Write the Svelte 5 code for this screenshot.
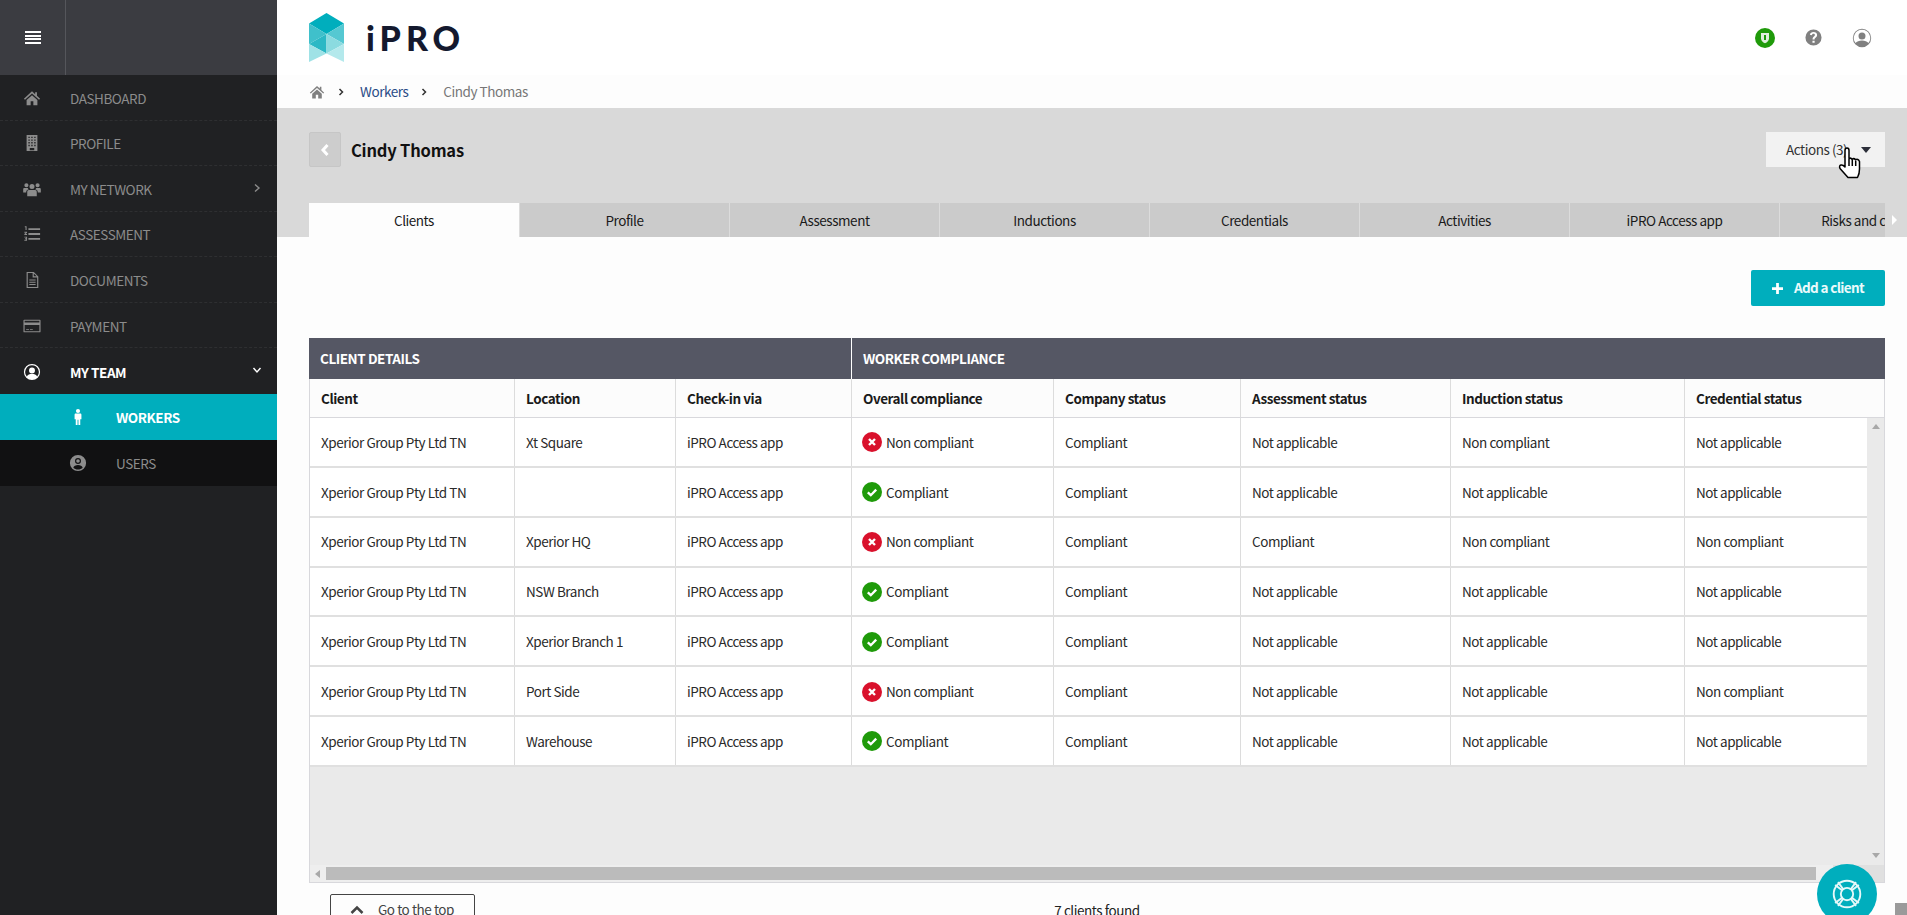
<script>
  const menu = [
    { label: 'DASHBOARD', d: 'M10 2.500l3.500 3.200V3.500h2v4l3.500 3.300-1.200 1.200L10 5l-7.800 7L1 10.800zM4 12.200L10 7l6 5.200V18h-4.500v-4.500h-3V18H4z' },
    { label: 'PROFILE', d: 'M4 1h12v18H4zM6 3v1.500h1.500V3zM9.200 3v1.500h1.500V3zM12.500 3v1.500H14V3zM6 6v1.500h1.500V6zM9.200 6v1.500h1.500V6zM12.500 6v1.500H14V6zM6 9v1.500h1.500V9zM9.200 9v1.500h1.500V9zM12.500 9v1.500H14V9zM6 12v1.500h1.500V12zM9.200 12v1.500h1.500V12zM12.500 12v1.500H14V12zM7.500 15.500V18h5v-2.500z' },
    { label: 'MY NETWORK', arrow: 'right', d: 'M10 4.500a2.800 2.800 0 1 1 0 5.600 2.800 2.800 0 0 1 0-5.600zM3.800 3.500a2.300 2.300 0 1 1 0 4.600 2.300 2.300 0 0 1 0-4.600zM16.200 3.500a2.300 2.300 0 1 1 0 4.600 2.300 2.300 0 0 1 0-4.600zM6.500 11h7c1.200 0 1.800 1 1.800 2.500V18H4.700v-4.500C4.700 12 5.300 11 6.500 11zM.2 10.500c0-1 .6-1.500 1.500-1.500h3.600c.4 1 .7 1.200 1.200 1.300-2 .4-3 1.500-3 3.700H.2zM19.800 10.500c0-1-.6-1.500-1.500-1.500h-3.600c-.4 1-.7 1.200-1.200 1.300 2 .4 3 1.500 3 3.700h3.300z' },
    { label: 'ASSESSMENT', d: 'M6 3.500h13v2H6zM6 9h13v2H6zM6 14.500h13v2H6zM2 1.500h2v4H2.800V2.600H2zM1.500 7.500h3v1L3 10h1.500v1h-3v-1L3 8.500H1.500zM1.500 13h3v4.500h-3v-1h2v-.7H2.300v-1h1.200V14h-2z' },
    { label: 'DOCUMENTS', d: 'M4 1h8l5 5v13H4zM5.300 2.300v15.400h10.400V7.200h-5V2.300zM12 2.800v3.100h3.200zM7 9.500h7v1.100H7zM7 12h7v1.100H7zM7 14.500h7v1.100H7z' },
    { label: 'PAYMENT', d: 'M1.500 3h17a1 1 0 0 1 1 1v12a1 1 0 0 1-1 1h-17a1 1 0 0 1-1-1V4a1 1 0 0 1 1-1zM1.800 9v6.700h16.400V9zM1.800 4.300v1.900h16.400V4.300zM3.500 13.200h3.200v1H3.500zM7.700 13.200h3.200v1H7.700z' },
    { label: 'MY TEAM', active: true, arrow: 'down', d: 'M10 1a9 9 0 1 0 0 18 9 9 0 0 0 0-18zM10 2.500a7.500 7.500 0 0 1 5.700 12.400c-1-2-3-2.600-5.700-2.600s-4.700.6-5.700 2.600A7.500 7.500 0 0 1 10 2.500zM10 5a3.300 3.300 0 1 1 0 6.600A3.300 3.300 0 0 1 10 5z' }
  ];

  const tabs = ['Clients', 'Profile', 'Assessment', 'Inductions', 'Credentials', 'Activities', 'iPRO Access app', 'Risks and compliance'];
  const heads = ['Client', 'Location', 'Check-in via', 'Overall compliance', 'Company status', 'Assessment status', 'Induction status', 'Credential status'];

  const rows = [
    { location: 'Xt Square', ok: false, assessment: 'Not applicable', induction: 'Non compliant', credential: 'Not applicable' },
    { location: '', ok: true, assessment: 'Not applicable', induction: 'Not applicable', credential: 'Not applicable' },
    { location: 'Xperior HQ', ok: false, assessment: 'Compliant', induction: 'Non compliant', credential: 'Non compliant' },
    { location: 'NSW Branch', ok: true, assessment: 'Not applicable', induction: 'Not applicable', credential: 'Not applicable' },
    { location: 'Xperior Branch 1', ok: true, assessment: 'Not applicable', induction: 'Not applicable', credential: 'Not applicable' },
    { location: 'Port Side', ok: false, assessment: 'Not applicable', induction: 'Not applicable', credential: 'Non compliant' },
    { location: 'Warehouse', ok: true, assessment: 'Not applicable', induction: 'Not applicable', credential: 'Not applicable' }
  ];
</script>

<div class="app">
  <aside class="sidebar">
    <div class="side-top">
      <button class="burger" aria-label="Menu"><span></span><span></span><span></span><span></span></button>
    </div>
    <nav>
      {#each menu as item}
        <div class="nav-item" class:active={item.active}>
          <svg class="nav-icon" viewBox="0 0 20 20"><path fill-rule="evenodd" d={item.d} /></svg>
          <span>{item.label}</span>
          {#if item.arrow === 'right'}
            <svg class="nav-arrow" viewBox="0 0 10 10"><path d="M3 1.500l4 3.500-4 3.500" /></svg>
          {:else if item.arrow === 'down'}
            <svg class="nav-arrow" viewBox="0 0 10 10"><path d="M1.500 3l3.500 4 3.500-4" /></svg>
          {/if}
        </div>
      {/each}
      <div class="sub-item current">
        <svg class="sub-icon" viewBox="0 0 20 20"><path d="M10 1a2.300 2.300 0 1 1 0 4.600A2.300 2.300 0 0 1 10 1zM7.500 6.200h5c.8 0 1.300.5 1.300 1.300v5h-1.300V19h-2v-6h-1v6h-2v-6.500H6.200v-5c0-.8.5-1.300 1.300-1.300z" /></svg>
        <span>WORKERS</span>
      </div>
      <div class="sub-item">
        <svg class="sub-icon" viewBox="0 0 20 20"><path fill-rule="evenodd" d="M10 1a9 9 0 1 0 0 18 9 9 0 0 0 0-18zM10 4.500a3.300 3.300 0 1 1 0 6.600 3.300 3.300 0 0 1 0-6.600zM10 5.800a2 2 0 1 0 0 4 2 2 0 0 0 0-4zM4.800 15.200c.6-1.800 2.600-3 5.200-3s4.600 1.200 5.200 3c-1.300 1.300-3.100 2-5.200 2s-3.900-.7-5.200-2z" /></svg>
        <span>USERS</span>
      </div>
    </nav>
  </aside>

  <main>
    <header class="topbar">
      <div class="logo">
        <svg class="logo-mark" viewBox="0 0 35 49">
          <path fill="#00aebd" d="M17.500 0L35 10.500 17.500 21 0 10.500z" />
          <path fill="#3fc0cb" d="M0 10.500L17.500 21 0 31z" />
          <path fill="#2bb8c5" d="M17.500 21L0 31l17.500 9.500z" />
          <path fill="#55c8d2" d="M35 10.500L17.500 21 35 31z" />
          <path fill="#8bdbe0" d="M17.500 21L35 31l-17.500 9.500z" />
          <path fill="#9fe2e6" d="M0 31l17.500 9.500L0 49z" />
          <path fill="#b4e9ec" d="M35 31L17.500 40.500 35 49z" />
        </svg>
        <span class="logo-text">iPRO</span>
      </div>
      <div class="top-icons">
        <span class="shield">
          <svg viewBox="0 0 20 20"><path d="M6 5h8v5.500c0 2.200-1.700 3.700-4 4.800-2.300-1.100-4-2.600-4-4.800z" fill="#dfeedd" /><path d="M9 7h2v5H9z" fill="#1f9a0a" /></svg>
        </span>
        <svg class="help" viewBox="0 0 20 20"><path fill-rule="evenodd" d="M10 1.500a8.500 8.500 0 1 0 0 17 8.500 8.500 0 0 0 0-17zM9 12.200h2.100c0-1.300.5-1.700 1.300-2.300.8-.7 1.400-1.400 1.400-2.600 0-2-1.600-3.100-3.800-3.100-2 0-3.400 1-3.800 2.900l2 .6c.2-1 .8-1.600 1.700-1.600s1.600.5 1.600 1.300c0 .7-.4 1-1 1.500-1 .8-1.500 1.500-1.500 3.300zM8.900 13.300h2.300v2.300H8.900z" /></svg>
        <svg class="account" viewBox="0 0 20 20"><path fill-rule="evenodd" d="M10 .8a9.200 9.200 0 1 0 0 18.400A9.200 9.200 0 0 0 10 .8zM10 1.800a8.200 8.200 0 0 1 6.400 13.300c-1.200-1.800-3.500-2.700-6.400-2.700s-5.200.9-6.400 2.700A8.200 8.200 0 0 1 10 1.800zM10 4.500a3.500 3.500 0 1 1 0 7 3.500 3.500 0 0 1 0-7z" /></svg>
      </div>
    </header>

    <div class="crumbs">
      <svg class="crumb-home" viewBox="0 0 20 20"><path d="M10 2.500l3.500 3.200V3.500h2v4l3.500 3.300-1.200 1.200L10 5l-7.800 7L1 10.800zM4 12.200L10 7l6 5.200V18h-4.500v-4.500h-3V18H4z" /></svg>
      <svg class="crumb-sep" viewBox="0 0 10 10"><path d="M3.500 2l3 3-3 3" /></svg>
      <span class="crumb-link">Workers</span>
      <svg class="crumb-sep" viewBox="0 0 10 10"><path d="M3.500 2l3 3-3 3" /></svg>
      <span>Cindy Thomas</span>
    </div>

    <section class="band">
      <div class="title-row">
        <button class="back" aria-label="Back">
          <svg viewBox="0 0 12 16"><path d="M8.500 3L4 8l4.500 5" /></svg>
        </button>
        <h1>Cindy Thomas</h1>
        <button class="actions">Actions (3) <i class="caret"></i></button>
      </div>
      <div class="tabs">
        {#each tabs as tab, i}
          <div class="tab" class:selected={i === 0}>{tab}</div>
        {/each}
      </div>
      <i class="tab-next"></i>
    </section>

    <section class="content">
      <div class="toolbar">
        <button class="add">
          <svg viewBox="0 0 12 12"><path d="M4.500 0h3v4.500H12v3H7.500V12h-3V7.500H0v-3h4.500z" /></svg>
          Add a client
        </button>
      </div>

      <div class="table">
        <div class="groups">
          <div>CLIENT DETAILS</div>
          <div>WORKER COMPLIANCE</div>
        </div>
        <div class="cols heads">
          {#each heads as head}
            <div class="cell">{head}</div>
          {/each}
        </div>
        <div class="body">
          <div class="rows">
            {#each rows as row}
              <div class="cols row">
                <div class="cell">Xperior Group Pty Ltd TN</div>
                <div class="cell">{row.location}</div>
                <div class="cell">iPRO Access app</div>
                <div class="cell status">
                  {#if row.ok}
                    <svg class="badge" viewBox="0 0 20 20"><circle cx="10" cy="10" r="10" fill="#1f9a0a" /><path d="M5.800 10.300l3 2.900 5.400-5.600" fill="none" stroke="#fff" stroke-width="2.300" /></svg>
                    Compliant
                  {:else}
                    <svg class="badge" viewBox="0 0 20 20"><circle cx="10" cy="10" r="10" fill="#d9112c" /><path d="M7 7l6 6M13 7l-6 6" fill="none" stroke="#fff" stroke-width="2.400" /></svg>
                    Non compliant
                  {/if}
                </div>
                <div class="cell">Compliant</div>
                <div class="cell">{row.assessment}</div>
                <div class="cell">{row.induction}</div>
                <div class="cell">{row.credential}</div>
              </div>
            {/each}
          </div>
          <div class="vscroll">
            <i class="tri up"></i>
            <i class="tri down"></i>
          </div>
        </div>
        <div class="hscroll">
          <i class="tri left"></i>
          <div class="thumb"></div>
          <div class="corner"></div>
        </div>
      </div>

      <div class="footer">
        <button class="go-top">
          <svg viewBox="0 0 14 10"><path d="M1.500 8L7 2.500 12.500 8" /></svg>
          Go to the top
        </button>
        <div class="found">7 clients found</div>
      </div>
    </section>
  </main>

  <div class="help-float">
    <svg viewBox="0 0 40 40">
      <circle cx="20" cy="20" r="14" />
      <circle cx="20" cy="20" r="6.500" />
      <path d="M10.500 7.500l6 8M29.500 7.500l-6 8M10.500 32.500l6-8M29.500 32.500l-6-8M7.500 10.500l8 6M32.500 10.500l-8 6M7.500 29.500l8-6M32.500 29.500l-8-6" />
    </svg>
  </div>
  <div class="page-thumb"></div>

  <svg class="cursor" viewBox="0 0 24 33">
    <path d="M7 3.500Q7 1 9 1t2 2.500V11.500q2-1 3 .8 2-1.500 3.500.4 2.500-1.300 4 1.800V22q0 5-2 8.500H10L2 21.500q-1.200-3 1-3.500 2-.4 4 2z" fill="#fff" stroke="#000" stroke-width="1.500" stroke-linejoin="round" />
    <path d="M11 12v7M14.300 13v6M17.700 13.500V19" fill="none" stroke="#000" stroke-width="1.500" />
  </svg>
</div>

<style>
  :global(body) {
    margin: 0;
    font-family: "Noto Sans CJK SC", "Source Sans Pro", "Noto Sans", sans-serif;
    font-size: 13.5px;
    letter-spacing: -0.45px;
    color: #222;
    background: #fdfdfd;
  }

  button {
    font: inherit;
    letter-spacing: inherit;
    cursor: pointer;
  }

  .app {
    display: flex;
    height: 915px;
    overflow: hidden;
    position: relative;
  }

  /* sidebar */
  .sidebar {
    width: 277px;
    flex: none;
    background: #202123;
  }

  .side-top {
    height: 75px;
    background: #3b3c41;
  }

  .burger {
    width: 66px;
    height: 75px;
    padding: 0;
    background: none;
    border: 0;
    border-right: 1px solid #55565b;
    display: flex;
    flex-direction: column;
    align-items: center;
    justify-content: center;
    gap: 1.4px;
  }

  .burger span {
    width: 16px;
    height: 2.2px;
    background: #fff;
  }

  .nav-item {
    height: 45.57px;
    box-sizing: border-box;
    display: flex;
    align-items: center;
    position: relative;
    color: #8c8c8c;
    border-bottom: 1px dashed #2e2f31;
    padding: 1px 0 0 23px;
  }

  .nav-item:nth-child(7) {
    border-bottom: 0;
  }

  .nav-item.active {
    color: #fff;
    font-weight: 700;
  }

  .nav-icon {
    width: 18px;
    height: 18px;
    fill: currentColor;
    margin-right: 29px;
  }

  .nav-arrow {
    position: absolute;
    right: 15px;
    top: 17px;
    width: 10px;
    height: 10px;
    fill: none;
    stroke: currentColor;
    stroke-width: 1.4;
  }

  .sub-item {
    height: 46px;
    display: flex;
    align-items: center;
    padding-left: 69px;
    background: #111112;
    color: #8c8c8c;
  }

  .sub-item.current {
    background: #00aebd;
    color: #fff;
    font-weight: 700;
  }

  .sub-icon {
    width: 18px;
    height: 18px;
    fill: currentColor;
    margin-right: 29px;
  }

  /* main column */
  main {
    flex: 1;
    min-width: 0;
  }

  .topbar {
    height: 75px;
    background: #fff;
    display: flex;
    align-items: center;
    justify-content: space-between;
    padding: 0 35px 0 32px;
  }

  .logo {
    display: flex;
    align-items: center;
    gap: 22px;
  }

  .logo-mark {
    width: 35px;
    height: 49px;
  }

  .logo-text {
    font-family: Lato, sans-serif;
    font-weight: 900;
    font-size: 34px;
    line-height: 1;
    letter-spacing: 5px;
    color: #14192e;
  }

  .top-icons {
    display: flex;
    align-items: center;
  }

  .shield {
    width: 20px;
    height: 20px;
    border-radius: 50%;
    background: #1f9a0a;
    display: block;
    margin-right: 29px;
  }

  .shield svg {
    display: block;
  }

  .help {
    width: 19px;
    height: 19px;
    fill: #808080;
    margin-right: 29px;
  }

  .account {
    width: 20px;
    height: 20px;
    fill: #808080;
  }

  .crumbs {
    height: 33px;
    display: flex;
    align-items: center;
    padding-left: 32px;
    color: #777;
    line-height: 1;
  }

  .crumb-home {
    width: 16px;
    height: 16px;
    fill: #808080;
  }

  .crumb-sep {
    width: 10px;
    height: 10px;
    margin: 0 14px 0 11px;
    fill: none;
    stroke: #333;
    stroke-width: 1.5;
  }

  .crumb-link {
    color: #2b4c87;
  }

  .band {
    height: 129px;
    background: #d9d9d9;
    padding: 24px 22px 0 32px;
    box-sizing: border-box;
    position: relative;
  }

  .title-row {
    display: flex;
    align-items: center;
    height: 35px;
    margin-bottom: 36px;
  }

  .back {
    width: 32px;
    height: 35px;
    padding: 0;
    background: #cdcdcd;
    border: 1px solid #c6c6c6;
    border-radius: 2px;
    display: flex;
    align-items: center;
    justify-content: center;
  }

  .back svg {
    width: 12px;
    height: 16px;
    fill: none;
    stroke: #fff;
    stroke-width: 3;
  }

  h1 {
    margin: 2px 0 0 10px;
    font-size: 16.5px;
    letter-spacing: -0.2px;
    font-weight: 700;
    line-height: 1;
    color: #111;
    flex: 1;
  }

  .actions {
    width: 119px;
    height: 35px;
    padding: 0 0 0 20px;
    background: #f2f2f2;
    border: 0;
    color: #333;
    display: flex;
    align-items: center;
    gap: 14px;
    line-height: 1;
  }

  .caret {
    border: 5px solid transparent;
    border-top: 6px solid #2c2f3a;
    border-bottom: 0;
  }

  .tabs {
    display: flex;
    height: 34px;
    overflow: hidden;
  }

  .tab {
    width: 210px;
    flex: none;
    box-sizing: border-box;
    background: #cbcbcb;
    border-left: 1px solid #dcdcdc;
    text-align: center;
    line-height: 34px;
    color: #1a1a1a;
    white-space: nowrap;
  }

  .tab.selected {
    background: #fdfdfd;
    border-left: 0;
  }

  .tab-next {
    position: absolute;
    right: 10px;
    bottom: 12px;
    border: 5px solid transparent;
    border-left: 5px solid #fff;
    border-right: 0;
  }

  /* content */
  .content {
    padding: 33px 22px 0 32px;
  }

  .toolbar {
    display: flex;
    justify-content: flex-end;
    height: 36px;
    margin-bottom: 32px;
  }

  .add {
    width: 134px;
    height: 36px;
    padding: 0;
    border: 0;
    border-radius: 2px;
    background: #00aebd;
    color: #eafafb;
    font-weight: 700;
    letter-spacing: -0.65px;
    display: flex;
    align-items: center;
    justify-content: center;
    gap: 11px;
    line-height: 1;
  }

  .add svg {
    width: 11px;
    height: 11px;
    fill: #fff;
  }

  .table {
    width: 1576px;
    box-sizing: border-box;
    border: solid #d8d8dc;
    border-width: 0 1px 1px;
    background: #eaeaea;
    line-height: 1;
  }

  .groups {
    height: 41px;
    margin: 0 -1px;
    background: #555764;
    color: #fff;
    font-weight: 700;
    display: grid;
    grid-template-columns: 542px 1fr;
    align-items: stretch;
  }

  .groups div {
    display: flex;
    align-items: center;
    padding-left: 11px;
  }

  .groups div + div {
    border-left: 1px solid #fff;
    padding-left: 11px;
  }

  .cols {
    display: grid;
    grid-template-columns: 204px 161px 176px 202px 187px 210px 234px 1fr;
  }

  .heads {
    height: 39px;
    background: #fcfcfc;
    font-weight: 700;
    color: #1a1a1a;
    border-bottom: 1px solid #d8d8dc;
    box-sizing: border-box;
  }

  .cell {
    display: flex;
    align-items: center;
    padding: 1px 0 0 11px;
    white-space: nowrap;
    border-left: 1px solid #dcdcdc;
    box-sizing: border-box;
  }

  .cell:first-child {
    border-left: 0;
    padding-left: 11px;
  }

  .body {
    display: flex;
    height: 447px;
  }

  .rows {
    width: 1557px;
  }

  .row {
    height: 49.85px;
    box-sizing: border-box;
    background: #fff;
    border-bottom: 2px solid #e0e0e0;
    color: #2a2a2a;
  }

  .badge {
    width: 20px;
    height: 20px;
    margin-right: 4px;
    flex: none;
  }

  .status {
    padding-left: 10px;
  }

  .vscroll {
    flex: 1;
    display: flex;
    flex-direction: column;
    justify-content: space-between;
    align-items: center;
    padding: 6px 0 7px;
  }

  .tri {
    display: block;
    border: 4px solid transparent;
  }

  .tri.up {
    border-top: 0;
    border-bottom: 5px solid #a8a8a8;
  }

  .tri.down {
    border-bottom: 0;
    border-top: 5px solid #a8a8a8;
  }

  .tri.left {
    border-left: 0;
    border-right: 5px solid #a8a8a8;
    margin: 0 6px 0 5px;
  }

  .hscroll {
    height: 17px;
    display: flex;
    align-items: center;
    background: #eeeeee;
  }

  .thumb {
    flex: 1;
    height: 13px;
    background: #bbbbbb;
  }

  .corner {
    width: 51px;
    height: 17px;
    background: #e0e0e0;
    margin-left: 17px;
  }

  .footer {
    width: 1576px;
    display: grid;
    grid-template-columns: 1fr auto 1fr;
    align-items: center;
    padding-top: 11px;
    color: #444;
  }

  .go-top {
    width: 145px;
    height: 32px;
    margin-left: 21px;
    padding: 0 0 0 19px;
    background: none;
    border: 1px solid #444;
    border-radius: 2px;
    color: #444;
    display: flex;
    align-items: center;
    gap: 14px;
    line-height: 1;
  }

  .go-top svg {
    width: 14px;
    height: 10px;
    fill: none;
    stroke: #444;
    stroke-width: 2.5;
  }

  .found {
    color: #222;
  }

  /* things floating over the page */
  .help-float {
    position: absolute;
    left: 1817px;
    top: 864px;
    width: 60px;
    height: 60px;
    border-radius: 50%;
    background: #00aebd;
    display: flex;
    align-items: center;
    justify-content: center;
  }

  .help-float svg {
    width: 38px;
    height: 38px;
    fill: none;
    stroke: #e6f8f9;
    stroke-width: 2;
  }

  .page-thumb {
    position: absolute;
    left: 1895px;
    top: 903px;
    width: 12px;
    height: 12px;
    background: #9a9a9a;
  }

  .cursor {
    position: absolute;
    left: 1838px;
    top: 147px;
    width: 24px;
    height: 33px;
  }
</style>
